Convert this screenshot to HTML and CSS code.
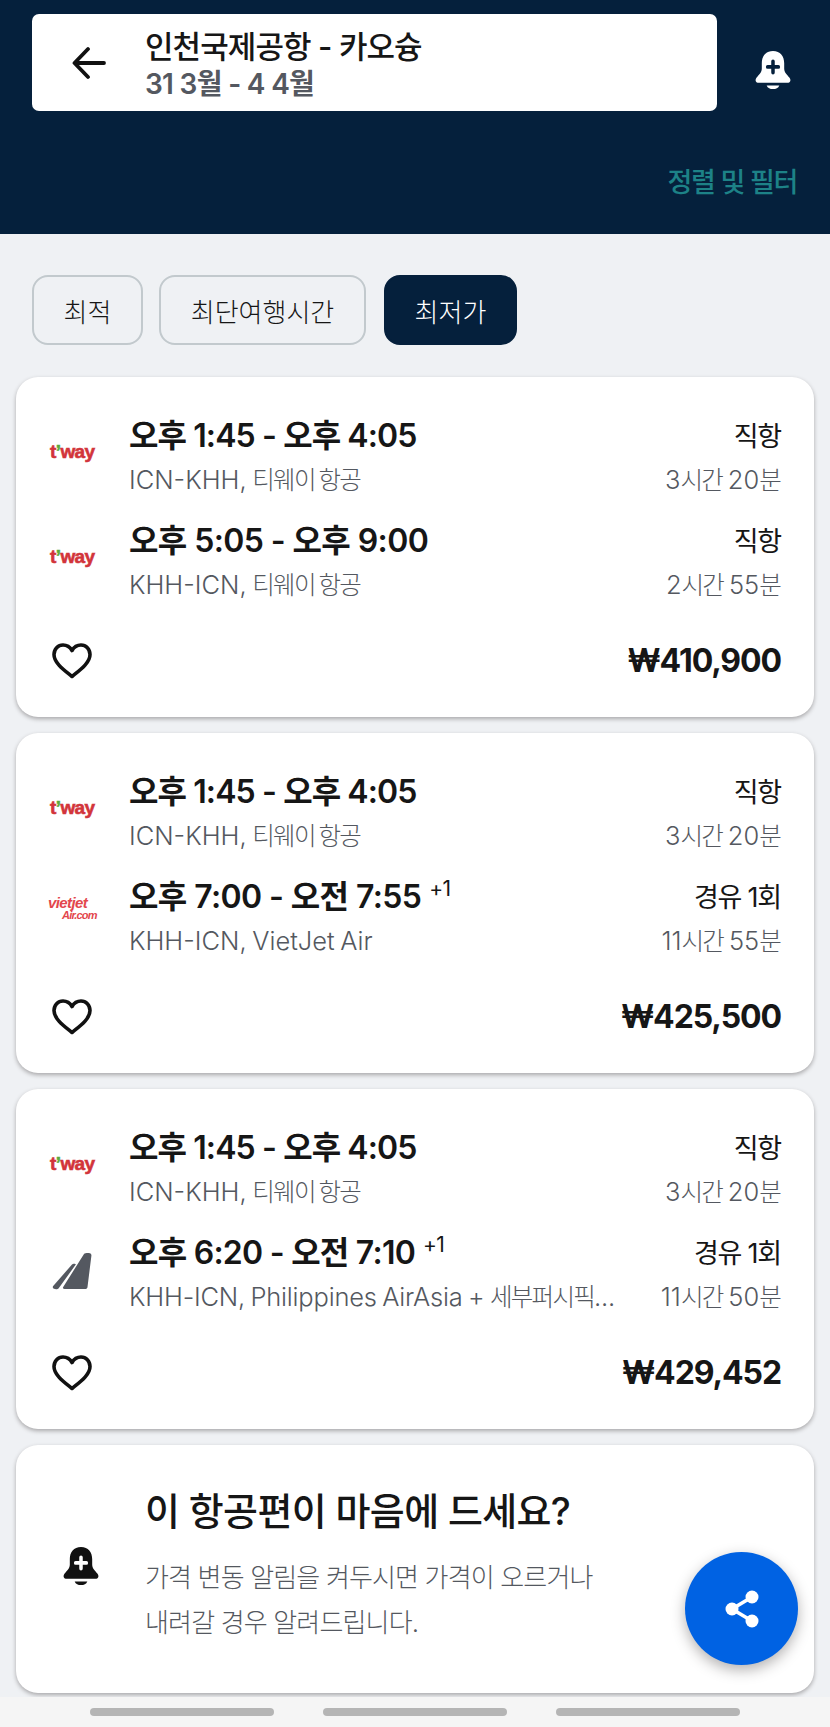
FILE: index.html
```html
<!DOCTYPE html>
<html lang="ko">
<head>
  <meta charset="UTF-8">
  <title>항공편 검색 결과</title>
  <link rel="stylesheet" href="styles.css">
</head>
<body>

  <header class="top">
    <div class="top-row">
      <div class="search">
        <svg class="back" viewBox="0 0 34 34" width="34" height="34"><path d="M32 17H3M16 3 2.500 17 16 31" fill="none" stroke="#111" stroke-width="3.800" stroke-linecap="round" stroke-linejoin="round"/></svg>
        <div class="search-text">
          <div class="route">인천국제공항 - 카오슝</div>
          <div class="dates">31 3월 - 4 4월</div>
        </div>
      </div>
      <svg class="bell" viewBox="0 0 37 37" width="36" height="38" preserveAspectRatio="none"><path d="M18.500 0C26 0 30 5 30 12v5c0 4 3 6 5.500 9 2 3 .5 5-2.500 5H4c-3 0-4.500-2-2.500-5C4 23 7 21 7 17v-5C7 5 11 0 18.500 0Z" fill="#fff"/><path d="M12 33.500h13c-1 2.500-3.500 3.500-6.500 3.500S13 36 12 33.500Z" fill="#fff"/><path d="M18.500 10v11M13 15.500h11" stroke="#05203c" stroke-width="3.600" stroke-linecap="round"/></svg>
    </div>
    <div class="filter-link">정렬 및 필터</div>
  </header>

  <div class="chips">
    <div class="chip">최적</div>
    <div class="chip chip-long">최단여행시간</div>
    <div class="chip chip-on">최저가</div>
  </div>

  <div class="list">
    <div class="card">
      <div class="leg">
        <div class="logo tway">t<i>’</i>way</div>
        <div class="leg-main">
          <div class="times narrow">오후 1:45 - 오후 4:05</div>
          <div class="sub">ICN-KHH, <span class="ko">티웨이 항공</span></div>
        </div>
        <div class="leg-side">
          <div class="stops">직항</div>
          <div class="sub">3<span class="ko">시간</span> 20<span class="ko">분</span></div>
        </div>
      </div>
      <div class="leg">
        <div class="logo tway">t<i>’</i>way</div>
        <div class="leg-main">
          <div class="times">오후 5:05 - 오후 9:00</div>
          <div class="sub">KHH-ICN, <span class="ko">티웨이 항공</span></div>
        </div>
        <div class="leg-side">
          <div class="stops">직항</div>
          <div class="sub">2<span class="ko">시간</span> 55<span class="ko">분</span></div>
        </div>
      </div>
      <div class="card-foot">
        <svg class="heart" viewBox="0 0 40 36" width="40" height="36"><path d="M20 33.500C12 27 2 20 2 11.500 2 6 6 2 11 2c4 0 7 2 9 5.500C22 4 25 2 29 2c5 0 9 4 9 9.500C38 20 28 27 20 33.500Z" fill="none" stroke="#111" stroke-width="3.600" stroke-linejoin="round"/></svg>
        <div class="price">₩410,900</div>
      </div>
    </div>

    <div class="card">
      <div class="leg">
        <div class="logo tway">t<i>’</i>way</div>
        <div class="leg-main">
          <div class="times narrow">오후 1:45 - 오후 4:05</div>
          <div class="sub">ICN-KHH, <span class="ko">티웨이 항공</span></div>
        </div>
        <div class="leg-side">
          <div class="stops">직항</div>
          <div class="sub">3<span class="ko">시간</span> 20<span class="ko">분</span></div>
        </div>
      </div>
      <div class="leg">
        <div class="logo vietjet">vietjet<span>Air.com</span></div>
        <div class="leg-main">
          <div class="times">오후 7:00 - 오전 7:55<sup>+1</sup></div>
          <div class="sub">KHH-ICN, VietJet Air</div>
        </div>
        <div class="leg-side">
          <div class="stops">경유 1회</div>
          <div class="sub">11<span class="ko">시간</span> 55<span class="ko">분</span></div>
        </div>
      </div>
      <div class="card-foot">
        <svg class="heart" viewBox="0 0 40 36" width="40" height="36"><path d="M20 33.500C12 27 2 20 2 11.500 2 6 6 2 11 2c4 0 7 2 9 5.500C22 4 25 2 29 2c5 0 9 4 9 9.500C38 20 28 27 20 33.500Z" fill="none" stroke="#111" stroke-width="3.600" stroke-linejoin="round"/></svg>
        <div class="price">₩425,500</div>
      </div>
    </div>

    <div class="card">
      <div class="leg">
        <div class="logo tway">t<i>’</i>way</div>
        <div class="leg-main">
          <div class="times narrow">오후 1:45 - 오후 4:05</div>
          <div class="sub">ICN-KHH, <span class="ko">티웨이 항공</span></div>
        </div>
        <div class="leg-side">
          <div class="stops">직항</div>
          <div class="sub">3<span class="ko">시간</span> 20<span class="ko">분</span></div>
        </div>
      </div>
      <div class="leg">
        <div class="logo logo-generic">
          <svg viewBox="0 0 40 40" width="40" height="40"><path d="M20 13.500c.8-.8 3.500-1 3.800 0L6.500 37.500c-.8 1-3.500 1-5 0-.8-.5-1-1.500-.3-2.500ZM32 3c1-1 6-1.500 7 0 .5.700.5 1.500.3 2.500L35.500 36c-.2 1.500-1 2-2.500 2H12.500c-1.500 0-2-1-1.300-2Z" fill="#545860"/></svg>
        </div>
        <div class="leg-main">
          <div class="times mid">오후 6:20 - 오전 7:10<sup>+1</sup></div>
          <div class="sub sub-tight">KHH-ICN, Philippines AirAsia + <span class="ko">세부퍼시픽</span>...</div>
        </div>
        <div class="leg-side">
          <div class="stops">경유 1회</div>
          <div class="sub">11<span class="ko">시간</span> 50<span class="ko">분</span></div>
        </div>
      </div>
      <div class="card-foot">
        <svg class="heart" viewBox="0 0 40 36" width="40" height="36"><path d="M20 33.500C12 27 2 20 2 11.500 2 6 6 2 11 2c4 0 7 2 9 5.500C22 4 25 2 29 2c5 0 9 4 9 9.500C38 20 28 27 20 33.500Z" fill="none" stroke="#111" stroke-width="3.600" stroke-linejoin="round"/></svg>
        <div class="price">₩429,452</div>
      </div>
    </div>

    <div class="card alert-card">
      <svg class="alert-bell" viewBox="0 0 37 37" width="36" height="38" preserveAspectRatio="none"><path d="M18.500 0C26 0 30 5 30 12v5c0 4 3 6 5.500 9 2 3 .5 5-2.500 5H4c-3 0-4.500-2-2.500-5C4 23 7 21 7 17v-5C7 5 11 0 18.500 0Z" fill="#111"/><path d="M12 33.500h13c-1 2.500-3.500 3.500-6.500 3.500S13 36 12 33.500Z" fill="#111"/><path d="M18.500 10v11M13 15.500h11" stroke="#fff" stroke-width="3.600" stroke-linecap="round"/></svg>
      <div class="alert-text">
        <div class="alert-title">이 항공편이 마음에 드세요?</div>
        <div class="alert-body">가격 변동 알림을 켜두시면 가격이 오르거나<br>내려갈 경우 알려드립니다.</div>
      </div>
    </div>
  </div>

  <div class="bottom-nav">
    <span></span>
    <span></span>
    <span></span>
  </div>

  <div class="fab">
    <svg viewBox="0 0 36 38" width="36" height="38"><path d="M28 7 8 19l20 12" fill="none" stroke="#fff" stroke-width="3.600"/><circle cx="28" cy="7" r="6.500" fill="#fff"/><circle cx="8" cy="19" r="6.500" fill="#fff"/><circle cx="28" cy="31" r="6.500" fill="#fff"/></svg>
  </div>

</body>
</html>
```

FILE: styles.css
```css
* {
  box-sizing: border-box;
}

body {
  margin: 0;
  height: 1727px;
  overflow: hidden;
  position: relative;
  background-color: #eff1f4;
  color: #161616;
  font-family: Inter, "Noto Sans CJK KR", sans-serif;
}

.top {
  height: 234px;
  padding: 14px 33px 0 32px;
  background-color: #05203c;
}

.top-row {
  display: flex;
  align-items: center;
  justify-content: space-between;
}

.search {
  width: 685px;
  height: 97px;
  display: flex;
  align-items: center;
  padding-left: 40px;
  background: #fff;
  border-radius: 7px;
}

.back {
  margin-right: 39px;
}

.search-text {
  margin-top: 4px;
}

.route {
  font-size: 31px;
  font-weight: 500;
  line-height: 40px;
  color: #161616;
  letter-spacing: -0.9px;
}

.dates {
  font-size: 28px;
  font-weight: 600;
  line-height: 35px;
  color: #545860;
  letter-spacing: -0.7px;
}

.bell {
  margin: 14px 6px 0 0;
}

.filter-link {
  margin-top: 50px;
  text-align: right;
  font-size: 27px;
  font-weight: 500;
  color: #1d8287;
  letter-spacing: -1.3px;
}

.chips {
  display: flex;
  gap: 16px;
  padding: 41px 0 0 32px;
}

.chip {
  width: 111px;
  height: 70px;
  display: flex;
  align-items: center;
  justify-content: center;
  background: #eff1f4;
  border: 2px solid #c2c9cd;
  border-radius: 16px;
  font-size: 26px;
  font-weight: 300;
}

.chip-long {
  width: 207px;
}

.chip-on {
  width: 133px;
  margin-left: 2px;
  background: #05203c;
  border-color: #05203c;
  color: #fff;
}

.list {
  padding: 32px 16px 0;
  display: flex;
  flex-direction: column;
  gap: 16px;
}

.card {
  height: 340px;
  padding: 34px 33px 0 0;
  background: #fff;
  border-radius: 22px;
  box-shadow: 0 2px 4px rgba(37, 32, 31, 0.35);
}

.leg {
  height: 105px;
  display: flex;
}

.logo {
  width: 113px;
  flex: none;
}

.tway {
  padding: 30px 0 0 34px;
  font-family: "Liberation Sans", sans-serif;
  font-size: 19px;
  font-weight: 700;
  color: #d2343a;
  letter-spacing: -0.6px;
  -webkit-text-stroke: 0.6px #d2343a;
}

.tway i {
  font-style: normal;
  color: #5aa83c;
  -webkit-text-stroke: 0.6px #5aa83c;
}

.vietjet {
  padding: 24px 0 0 32px;
  font-family: "Liberation Sans", sans-serif;
  font-size: 15px;
  font-weight: 700;
  line-height: 13px;
  font-style: italic;
  color: #e3464c;
  letter-spacing: -0.6px;
}

.vietjet span {
  display: block;
  padding-left: 14px;
  font-size: 11px;
  letter-spacing: -0.8px;
}

.logo-generic {
  padding: 23px 0 0 36px;
}

.leg-main {
  flex: 1;
  min-width: 0;
}

.leg-side {
  flex: none;
  text-align: right;
}

.times {
  height: 51px;
  font-size: 32px;
  font-weight: 600;
  line-height: 49px;
  letter-spacing: -0.6px;
  white-space: nowrap;
}

.narrow {
  letter-spacing: -0.9px;
}

.mid {
  letter-spacing: -0.75px;
}

.times sup {
  margin-left: 8px;
  font-size: 21px;
  font-weight: 400;
  line-height: 0;
  vertical-align: 12px;
}

.stops {
  height: 51px;
  font-size: 27px;
  line-height: 52px;
  letter-spacing: -1.2px;
}

.sub {
  font-size: 25.5px;
  font-weight: 300;
  line-height: 36px;
  color: #545860;
  letter-spacing: 0;
  word-spacing: -1.5px;
  white-space: nowrap;
}

.sub-tight {
  letter-spacing: -0.2px;
}

.sub .ko {
  font-size: 24.5px;
  letter-spacing: -1.7px;
}

.leg-side .sub {
  padding-right: 1px;
}

.card-foot {
  display: flex;
  align-items: center;
  justify-content: space-between;
  padding-left: 36px;
  margin-top: 20px;
}

.price {
  font-size: 32px;
  font-weight: 700;
  letter-spacing: -1.1px;
}

.alert-card {
  height: 248px;
  padding: 41px 0 0 129px;
  position: relative;
}

.alert-bell {
  position: absolute;
  left: 47px;
  top: 102px;
}

.alert-title {
  font-size: 38px;
  font-weight: 500;
  line-height: 50px;
  letter-spacing: -0.65px;
}

.alert-body {
  margin-top: 19px;
  font-size: 26px;
  font-weight: 300;
  line-height: 45px;
  color: #545860;
  letter-spacing: -0.85px;
}

.bottom-nav {
  position: absolute;
  left: 0;
  right: 0;
  bottom: 0;
  height: 30px;
  display: flex;
  justify-content: center;
  gap: 49px;
  padding-top: 11px;
  background: #f5f5f5;
}

.bottom-nav span {
  width: 184px;
  height: 8px;
  border-radius: 4px;
  background: #b5b5b5;
}

.fab {
  position: absolute;
  left: 685px;
  top: 1552px;
  width: 113px;
  height: 113px;
  display: flex;
  align-items: center;
  justify-content: center;
  border-radius: 50%;
  background: #0062e3;
  box-shadow: 0 5px 14px rgba(37, 32, 31, 0.35);
}
```
